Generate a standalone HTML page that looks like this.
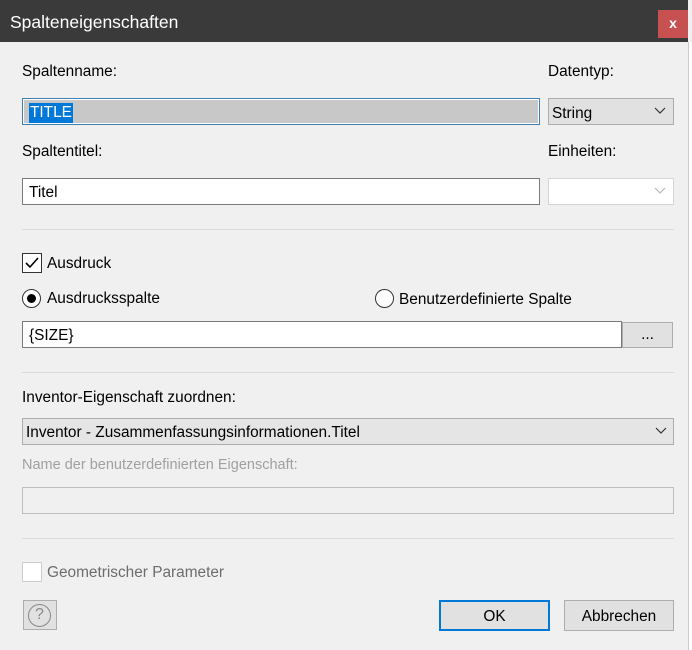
<!DOCTYPE html>
<html><head><style>
*{box-sizing:border-box;margin:0;padding:0}
body{width:692px;height:650px;background:#f0f0f0;font-family:"Liberation Sans",sans-serif;font-size:15.4px;color:#000;position:relative;overflow:hidden}
.a{position:absolute}
.t{position:absolute;line-height:20px;white-space:nowrap;margin-top:2px}
.box{position:absolute;border:1px solid #7a7a7a;background:#fff}
.sep{position:absolute;left:22px;width:652px;height:1px;background:#dadada}
</style></head><body>
<div class="a" style="left:0;top:0;width:688px;height:42px;background:#3a3a3a"></div>
<div class="t" style="left:10px;top:10px;color:#fff;font-size:17.5px">Spalteneigenschaften</div>
<div class="a" style="left:658px;top:10px;width:30px;height:28px;background:#c75050;color:#fff;font-weight:bold;text-align:center;line-height:27px;font-size:14px">x</div>
<div class="a" style="left:688px;top:42px;width:4px;height:608px;background:#fff;border-left:1px solid #ccc"></div>

<div class="t" style="left:22px;top:60px">Spaltenname:</div>
<div class="t" style="left:548px;top:60px">Datentyp:</div>
<div class="box" style="left:22px;top:98px;width:518px;height:27px;border-color:#3c7fb1;background:#c8c8c8;box-shadow:inset 0 0 0 1px #fff"></div>
<div class="t" style="left:29px;top:101px;background:#0078d7;color:#fff;padding:0 1px">TITLE</div>
<div class="box" style="left:548px;top:98px;width:126px;height:27px;background:#e1e1e1;border-color:#adadad"></div>
<div class="t" style="left:552px;top:102px">String</div>
<svg class="a" style="left:654px;top:107px" width="12" height="8"><path d="M1 1l5 5 5-5" fill="none" stroke="#333" stroke-width="1.2"/></svg>

<div class="t" style="left:22px;top:140px">Spaltentitel:</div>
<div class="t" style="left:548px;top:140px">Einheiten:</div>
<div class="box" style="left:22px;top:178px;width:518px;height:27px"></div>
<div class="t" style="left:29px;top:181px">Titel</div>
<div class="box" style="left:548px;top:178px;width:126px;height:27px;border-color:#d5d5d5"></div>
<svg class="a" style="left:654px;top:187px" width="12" height="8"><path d="M1 1l5 5 5-5" fill="none" stroke="#bbb" stroke-width="1.2"/></svg>

<div class="sep" style="top:229px"></div>

<div class="box" style="left:22px;top:253px;width:20px;height:20px;border-color:#333"></div>
<svg class="a" style="left:24px;top:255px" width="16" height="16"><path d="M2 8l4 4 8-9" fill="none" stroke="#000" stroke-width="1.6"/></svg>
<div class="t" style="left:47px;top:252px">Ausdruck</div>

<div class="a" style="left:22px;top:289px;width:19px;height:19px;border:1px solid #333;border-radius:50%;background:#fff"></div>
<div class="a" style="left:27px;top:294px;width:9px;height:9px;border-radius:50%;background:#000"></div>
<div class="t" style="left:47px;top:287px">Ausdrucksspalte</div>
<div class="a" style="left:375px;top:289px;width:19px;height:19px;border:1px solid #333;border-radius:50%;background:#fff"></div>
<div class="t" style="left:399px;top:288px">Benutzerdefinierte Spalte</div>

<div class="box" style="left:22px;top:321px;width:600px;height:27px"></div>
<div class="t" style="left:29px;top:324px">{SIZE}</div>
<div class="box" style="left:622px;top:322px;width:51px;height:26px;background:#e1e1e1;border-color:#adadad;text-align:center;line-height:24px">...</div>

<div class="sep" style="top:372px"></div>

<div class="t" style="left:22px;top:386px">Inventor-Eigenschaft zuordnen:</div>
<div class="box" style="left:22px;top:418px;width:652px;height:27px;background:#e5e5e5;border-color:#adadad"></div>
<div class="t" style="left:26px;top:421px">Inventor - Zusammenfassungsinformationen.Titel</div>
<svg class="a" style="left:655px;top:427px" width="12" height="8"><path d="M1 1l5 5 5-5" fill="none" stroke="#333" stroke-width="1.2"/></svg>

<div class="t" style="left:22px;top:453px;color:#a0a0a0;font-size:14.5px">Name der benutzerdefinierten Eigenschaft:</div>
<div class="box" style="left:22px;top:487px;width:652px;height:27px;background:#f0f0f0;border-color:#bfbfbf"></div>

<div class="sep" style="top:538px"></div>

<div class="box" style="left:22px;top:562px;width:20px;height:20px;border-color:#ccc"></div>
<div class="t" style="left:47px;top:561px;color:#6d6d6d">Geometrischer Parameter</div>

<div class="box" style="left:23px;top:600px;width:34px;height:30px;background:#e1e1e1;border-color:#adadad"></div>
<div class="a" style="left:28px;top:604px;width:23px;height:23px;border:1.5px solid #888;border-radius:50%;color:#888;text-align:center;line-height:20px;font-size:16px">?</div>

<div class="box" style="left:439px;top:600px;width:111px;height:31px;background:#e1e1e1;border:2px solid #0078d7;text-align:center;line-height:29px">OK</div>
<div class="box" style="left:564px;top:600px;width:110px;height:31px;background:#e1e1e1;border-color:#adadad;text-align:center;line-height:31px">Abbrechen</div>
</body></html>
